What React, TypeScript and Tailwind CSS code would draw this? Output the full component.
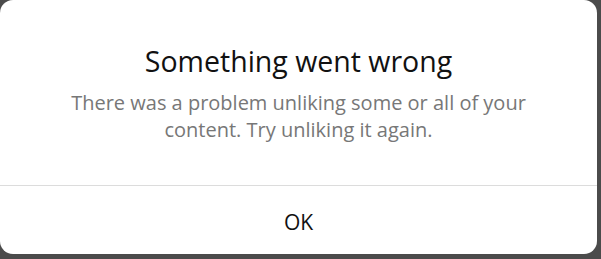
export default function App() {
  return (
    <div className="w-[601px] h-[259px] bg-[#4b4b4b] overflow-hidden" style={{ fontFamily: '"Open Sans", "Noto Sans", sans-serif' }}>
      <div className="w-[597px] h-[254px] bg-white rounded-[13px] flex flex-col">
        <div className="flex-1 flex flex-col items-center pt-[43px]">
          <h2 className="text-[28.5px] leading-[36px] text-[#111]">Something went wrong</h2>
          <p className="mt-[10px] text-[20px] leading-[27px] text-[#777] text-center">
            There was a problem unliking some or all of your
            <br />
            content. Try unliking it again.
          </p>
        </div>
        <div className="border-t border-[#dcdcdc] h-[69px] flex items-center justify-center">
          <button className="text-[21px] text-[#111] leading-none pt-[4px]">OK</button>
        </div>
      </div>
    </div>
  );
}
